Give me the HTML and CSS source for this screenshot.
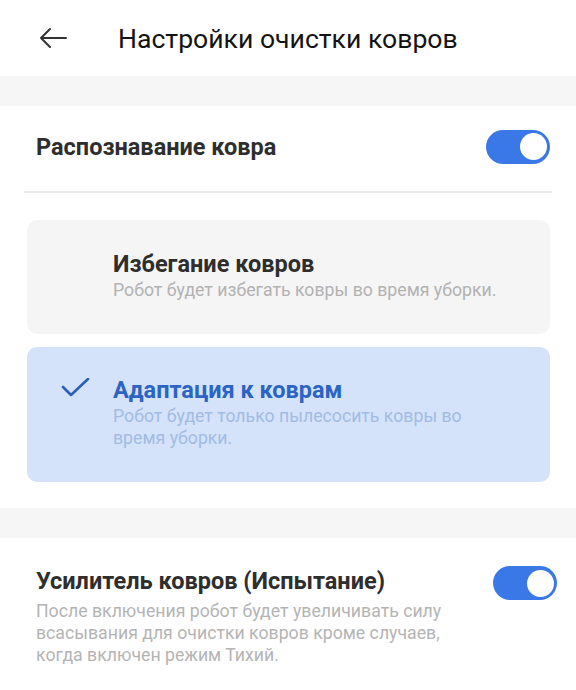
FILE: index.html
```html
<!DOCTYPE html>
<html lang="ru">
<head>
<meta charset="utf-8">
<title>Настройки очистки ковров</title>
<link rel="stylesheet" href="styles.css">
</head>
<body>
<header class="topbar">
  <button class="back" aria-label="Назад">
    <svg width="30" height="22" viewBox="0 0 30 22" fill="none" stroke="#333" stroke-width="2" stroke-linecap="round" stroke-linejoin="round">
      <path d="M28 11H3M12 2L3 11l9 9"/>
    </svg>
  </button>
  <h1 class="title">Настройки очистки ковров</h1>
</header>

<div class="band"></div>

<section class="panel">
  <div class="row">
    <span class="row-label">Распознавание ковра</span>
    <span class="switch on"><span class="knob"></span></span>
  </div>
  <div class="divider"></div>

  <div class="options">
    <div class="option">
      <span class="check"></span>
      <div class="option-text">
        <div class="option-title">Избегание ковров</div>
        <div class="option-desc">Робот будет избегать ковры во время уборки.</div>
      </div>
    </div>
    <div class="option selected">
      <span class="check">
        <svg width="30" height="22" viewBox="0 0 30 22" fill="none" stroke="#2c5fb8" stroke-width="2.6" stroke-linecap="round" stroke-linejoin="round">
          <path d="M2 9l8 8L27 1"/>
        </svg>
      </span>
      <div class="option-text">
        <div class="option-title">Адаптация к коврам</div>
        <div class="option-desc">Робот будет только пылесосить ковры во время уборки.</div>
      </div>
    </div>
  </div>
</section>

<div class="band"></div>

<section class="panel">
  <div class="row boost">
    <div class="boost-text">
      <span class="row-label">Усилитель ковров (Испытание)</span>
      <p class="boost-desc">После включения робот будет увеличивать силу всасывания для очистки ковров кроме случаев, когда включен режим Тихий.</p>
    </div>
    <span class="switch on"><span class="knob"></span></span>
  </div>
</section>
</body>
</html>
```

FILE: styles.css
```css
* { box-sizing: border-box; }

html, body {
  margin: 0;
  padding: 0;
  background: #fff;
  font-family: Roboto, "Noto Sans", "Liberation Sans", sans-serif;
}

.topbar {
  height: 76px;
  display: flex;
  align-items: center;
  padding-left: 38px;
}

.back {
  border: 0;
  background: none;
  padding: 0;
  width: 30px;
  height: 22px;
  display: flex;
}

.title {
  margin: 0 0 0 50px;
  font-size: 26.6px;
  font-weight: 400;
  color: #141414;
}

.band {
  height: 30px;
  background: #f6f6f6;
}

.panel {
  background: #fff;
  padding: 0 24px;
}

.row {
  height: 85px;
  display: flex;
  align-items: center;
  justify-content: space-between;
  padding: 0 2px 0 12px;
}

.row-label {
  font-size: 23.5px;
  font-weight: 700;
  color: #2e2e2e;
  line-height: 28px;
  margin-top: -3px;
}

.switch {
  width: 64px;
  height: 34px;
  border-radius: 17px;
  background: #3b78e7;
  display: flex;
  align-items: center;
  justify-content: flex-end;
  padding-right: 3px;
  flex-shrink: 0;
  margin-top: -4px;
}

.knob {
  width: 27px;
  height: 27px;
  border-radius: 50%;
  background: #fff;
}

.divider {
  height: 2px;
  background: #ececec;
}

.options {
  display: flex;
  flex-direction: column;
  gap: 13px;
  padding: 27px 2px 26px 3px;
}

.option {
  display: flex;
  align-items: flex-start;
  border-radius: 10px;
  background: #f5f5f5;
  min-height: 114px;
  padding: 30px 20px 20px 34px;
}

.option.selected {
  background: #d4e3fa;
  min-height: 135px;
  padding-top: 29px;
}

.check {
  width: 30px;
  height: 22px;
  margin: 2px 22px 0 0;
  flex-shrink: 0;
  display: flex;
}

.option-title {
  font-size: 23.5px;
  font-weight: 700;
  color: #2e2e2e;
  line-height: 28px;
}

.option-desc {
  margin-top: 1px;
  font-size: 17.7px;
  line-height: 22px;
  color: #b2b2b2;
  max-width: 390px;
}

.selected .option-title { color: #2c64c3; }
.selected .option-desc { color: #a2bbe3; }

.boost {
  height: auto;
  align-items: flex-start;
  padding-top: 27px;
  padding-right: 0;
  margin-right: -5px;
}

.boost .switch { margin-top: 1px; }

.boost-text .row-label {
  display: block;
  line-height: 32px;
  margin-top: 0;
}

.boost-desc {
  margin: 3px 0 0;
  font-size: 17.7px;
  line-height: 22px;
  color: #b4b4b4;
  max-width: 440px;
}
```
